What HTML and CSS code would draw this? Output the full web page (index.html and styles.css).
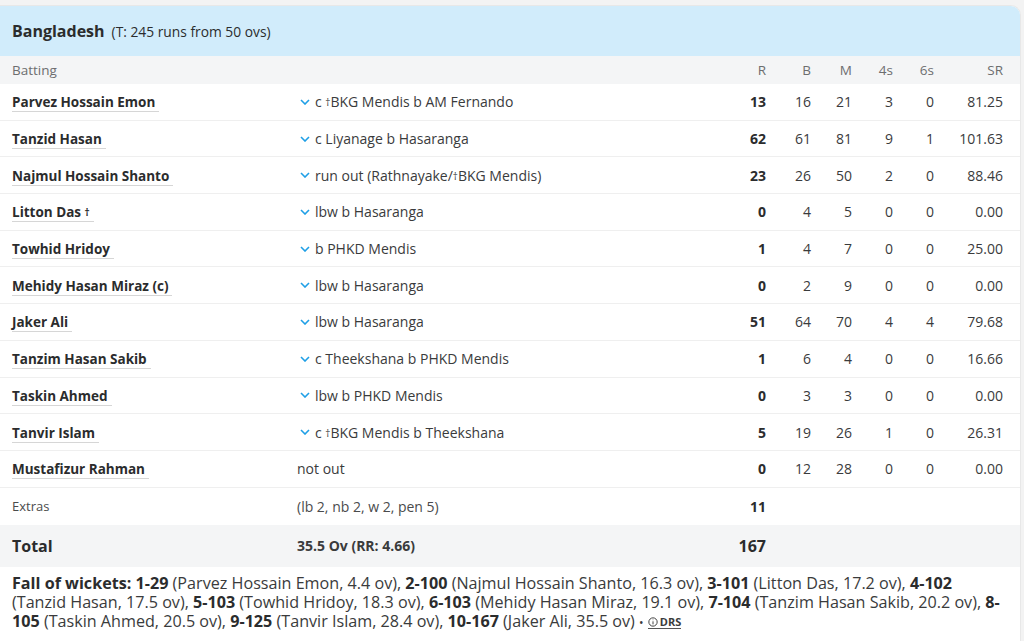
FILE: index.html
```html
<!DOCTYPE html>
<html lang="en">
<head>
<meta charset="utf-8">
<title>Bangladesh Scorecard</title>
<link rel="stylesheet" href="styles.css">
</head>
<body>
<div class="card">
  <div class="team-head">
    <span class="team-name">Bangladesh</span>
    <span class="target">(T: 245 runs from 50 ovs)</span>
  </div>
  <div class="row head-row">
    <div class="c-name">Batting</div>
    <div class="c-dis"></div>
    <div class="num">R</div>
    <div class="num">B</div>
    <div class="num">M</div>
    <div class="num">4s</div>
    <div class="num">6s</div>
    <div class="num">SR</div>
  </div>

  <div class="row bat">
    <div class="c-name"><span class="player">Parvez Hossain Emon</span></div>
    <div class="c-dis"><svg class="chev" viewBox="0 0 10 6"><path d="M1 1l4 4 4-4"/></svg><span>c <span class="dag">†</span>BKG Mendis b AM Fernando</span></div>
    <div class="num runs">13</div><div class="num">16</div><div class="num">21</div><div class="num">3</div><div class="num">0</div><div class="num">81.25</div>
  </div>
  <div class="row bat">
    <div class="c-name"><span class="player">Tanzid Hasan</span></div>
    <div class="c-dis"><svg class="chev" viewBox="0 0 10 6"><path d="M1 1l4 4 4-4"/></svg><span>c Liyanage b Hasaranga</span></div>
    <div class="num runs">62</div><div class="num">61</div><div class="num">81</div><div class="num">9</div><div class="num">1</div><div class="num">101.63</div>
  </div>
  <div class="row bat">
    <div class="c-name"><span class="player">Najmul Hossain Shanto</span></div>
    <div class="c-dis"><svg class="chev" viewBox="0 0 10 6"><path d="M1 1l4 4 4-4"/></svg><span>run out (Rathnayake/<span class="dag">†</span>BKG Mendis)</span></div>
    <div class="num runs">23</div><div class="num">26</div><div class="num">50</div><div class="num">2</div><div class="num">0</div><div class="num">88.46</div>
  </div>
  <div class="row bat">
    <div class="c-name"><span class="player">Litton Das <span class="dag">†</span></span></div>
    <div class="c-dis"><svg class="chev" viewBox="0 0 10 6"><path d="M1 1l4 4 4-4"/></svg><span>lbw b Hasaranga</span></div>
    <div class="num runs">0</div><div class="num">4</div><div class="num">5</div><div class="num">0</div><div class="num">0</div><div class="num">0.00</div>
  </div>
  <div class="row bat">
    <div class="c-name"><span class="player">Towhid Hridoy</span></div>
    <div class="c-dis"><svg class="chev" viewBox="0 0 10 6"><path d="M1 1l4 4 4-4"/></svg><span>b PHKD Mendis</span></div>
    <div class="num runs">1</div><div class="num">4</div><div class="num">7</div><div class="num">0</div><div class="num">0</div><div class="num">25.00</div>
  </div>
  <div class="row bat">
    <div class="c-name"><span class="player">Mehidy Hasan Miraz (c)</span></div>
    <div class="c-dis"><svg class="chev" viewBox="0 0 10 6"><path d="M1 1l4 4 4-4"/></svg><span>lbw b Hasaranga</span></div>
    <div class="num runs">0</div><div class="num">2</div><div class="num">9</div><div class="num">0</div><div class="num">0</div><div class="num">0.00</div>
  </div>
  <div class="row bat">
    <div class="c-name"><span class="player">Jaker Ali</span></div>
    <div class="c-dis"><svg class="chev" viewBox="0 0 10 6"><path d="M1 1l4 4 4-4"/></svg><span>lbw b Hasaranga</span></div>
    <div class="num runs">51</div><div class="num">64</div><div class="num">70</div><div class="num">4</div><div class="num">4</div><div class="num">79.68</div>
  </div>
  <div class="row bat">
    <div class="c-name"><span class="player">Tanzim Hasan Sakib</span></div>
    <div class="c-dis"><svg class="chev" viewBox="0 0 10 6"><path d="M1 1l4 4 4-4"/></svg><span>c Theekshana b PHKD Mendis</span></div>
    <div class="num runs">1</div><div class="num">6</div><div class="num">4</div><div class="num">0</div><div class="num">0</div><div class="num">16.66</div>
  </div>
  <div class="row bat">
    <div class="c-name"><span class="player">Taskin Ahmed</span></div>
    <div class="c-dis"><svg class="chev" viewBox="0 0 10 6"><path d="M1 1l4 4 4-4"/></svg><span>lbw b PHKD Mendis</span></div>
    <div class="num runs">0</div><div class="num">3</div><div class="num">3</div><div class="num">0</div><div class="num">0</div><div class="num">0.00</div>
  </div>
  <div class="row bat">
    <div class="c-name"><span class="player">Tanvir Islam</span></div>
    <div class="c-dis"><svg class="chev" viewBox="0 0 10 6"><path d="M1 1l4 4 4-4"/></svg><span>c <span class="dag">†</span>BKG Mendis b Theekshana</span></div>
    <div class="num runs">5</div><div class="num">19</div><div class="num">26</div><div class="num">1</div><div class="num">0</div><div class="num">26.31</div>
  </div>
  <div class="row bat">
    <div class="c-name"><span class="player">Mustafizur Rahman</span></div>
    <div class="c-dis no-chev"><span>not out</span></div>
    <div class="num runs">0</div><div class="num">12</div><div class="num">28</div><div class="num">0</div><div class="num">0</div><div class="num">0.00</div>
  </div>

  <div class="row extras">
    <div class="c-name">Extras</div>
    <div class="c-dis"><span>(lb 2, nb 2, w 2, pen 5)</span></div>
    <div class="num runs">11</div>
  </div>
  <div class="row total">
    <div class="c-name total-label">Total</div>
    <div class="c-dis total-ov"><span>35.5 Ov (RR: 4.66)</span></div>
    <div class="num total-runs">167</div>
  </div>

  <div class="fow">
    <b>Fall of wickets:</b> <b>1-29</b> (Parvez Hossain Emon, 4.4 ov), <b>2-100</b> (Najmul Hossain Shanto, 16.3 ov), <b>3-101</b> (Litton Das, 17.2 ov), <b>4-102</b> (Tanzid Hasan, 17.5 ov), <b>5-103</b> (Towhid Hridoy, 18.3 ov), <b>6-103</b> (Mehidy Hasan Miraz, 19.1 ov), <b>7-104</b> (Tanzim Hasan Sakib, 20.2 ov), <b>8-<wbr>105</b> (Taskin Ahmed, 20.5 ov), <b>9-125</b> (Tanvir Islam, 28.4 ov), <b>10-167</b> (Jaker Ali, 35.5 ov) <span class="dot">•</span> <span class="drs"><svg class="info" viewBox="0 0 12 12"><circle cx="6" cy="6" r="5"/><path d="M6 5.2v3.6M6 3.2v.6"/></svg>DRS</span>
  </div>
</div>
</body>
</html>
```
FILE: styles.css
```css
* { box-sizing: border-box; }
body {
  margin: 0;
  background: #f3f3f3;
  font-family: "Open Sans", "Noto Sans", sans-serif;
  color: #2b2c2d;
  padding-top: 5px;
  padding-right: 3px;
}
.card {
  background: #fff;
  border: 1px solid #e8e8e8;
  border-left: none;
  border-radius: 0 10px 0 0;
  overflow: hidden;
}
.team-head {
  background: #d1ecfb;
  height: 50px;
  display: flex;
  align-items: center;
  gap: 7px;
  padding-left: 12px;
}
.team-name {
  font-weight: 700;
  font-size: 16px;
}
.target {
  font-size: 13.8px;
}
.row {
  display: grid;
  grid-template-columns: 285px 1fr 40px 45px 41px 41px 41px 69px;
  align-items: center;
  padding: 0 17px 0 12px;
  font-size: 14px;
}
.head-row {
  height: 28px;
  background: #f4f5f6;
  color: #6d6e6f;
  font-size: 13.5px;
}
.bat {
  height: 36.7px;
  border-bottom: 1px solid #efefef;
  color: #3a3b3c;
}
.num { text-align: right; }
.runs { font-weight: 700; color: #2b2c2d; }
.player {
  font-weight: 700;
  font-size: 13.5px;
  color: #2b2c2d;
  border-bottom: 1px solid #d6d6d6;
  padding-right: 4px;
}
.c-dis {
  display: flex;
  align-items: center;
  white-space: nowrap;
}
.bat .c-dis { padding-left: 3px; }
.bat .c-dis.no-chev { padding-left: 0; }
.chev {
  width: 10px;
  height: 6px;
  margin-right: 5px;
  fill: none;
  stroke: #1f9fe6;
  stroke-width: 1.6;
  flex: none;
}
.dag {
  font-size: 10px;
  position: relative;
  top: -1px;
}
.extras {
  height: 37px;
  color: #4a4b4c;
}
.extras .c-name { font-size: 13px; }
.total {
  height: 42px;
  background: #f4f5f6;
}
.total-label {
  font-weight: 700;
  font-size: 16px;
}
.total-ov {
  font-weight: 700;
  font-size: 14px;
  color: #3a3b3c;
}
.total-runs {
  font-weight: 700;
  font-size: 16px;
}
.fow {
  padding: 7px 18px 11px 12px;
  font-size: 16.15px;
  line-height: 19px;
  color: #3a3b3c;
}
.fow b { color: #2b2c2d; }
.dot { font-size: 12px; }
.drs {
  font-weight: 700;
  font-size: 11px;
  border-bottom: 1px solid #555;
  display: inline-flex;
  align-items: center;
  gap: 2px;
  line-height: 12px;
}
.info {
  width: 10px;
  height: 10px;
  fill: none;
  stroke: #333;
  stroke-width: 1.1;
}
```
